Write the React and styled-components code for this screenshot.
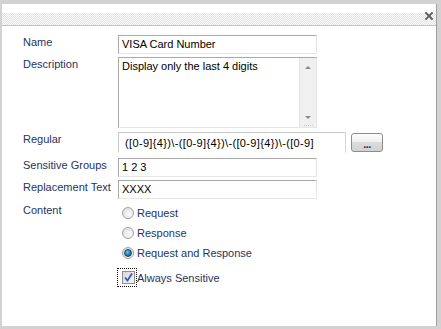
import React from 'react';
import styled, { createGlobalStyle } from 'styled-components';

const GlobalStyle = createGlobalStyle`
  html, body {
    margin: 0;
    padding: 0;
    background: #d2d2d2;
  }
  body {
    font-family: "Liberation Sans", Arial, sans-serif;
    font-size: 11px;
  }
`

const Window = styled.div`
  box-sizing: border-box;
  width: 441px;
  height: 329px;
  padding: 4px 4px 3px 2px;
  background: #d2d2d2;
`

const Panel = styled.div`
  box-sizing: border-box;
  height: 100%;
  background: #fff;
  border-right: 1px solid #9e9e9e;
  display: flex;
  flex-direction: column;
`

const Header = styled.div`
  box-sizing: content-box;
  height: 13px;
  border-bottom: 1px solid #c4c4c4;
  display: flex;
  justify-content: flex-end;
  align-items: flex-start;
  padding: 8px 3px 0 0;
  background-color: #fff;
  background-image:
    linear-gradient(#fff, #fff),
    conic-gradient(#e2e2e2 25%, #fbfbfb 0 50%, #e2e2e2 0 75%, #fbfbfb 0);
  background-size: 100% 9px, 2px 2px;
  background-repeat: no-repeat, repeat;
`

const Close = styled.svg`
  width: 8px;
  height: 8px;
  display: block;
`

const Form = styled.div`
  padding: 9px 0 0 21px;
  display: flex;
  flex-direction: column;
`

const Row = styled.div`
  display: flex;
  align-items: flex-start;
  margin-top: ${p => p.$mt || 0}px;
`

const Label = styled.div`
  width: 95px;
  flex: none;
  line-height: 13px;
  padding-top: 1px;
  color: #1f3462;
`

const Field = styled.div`
  box-sizing: border-box;
  width: ${p => p.$w || 199}px;
  height: ${p => p.$h || 19}px;
  border: 1px solid;
  border-color: #a9a9a9 #e6e6e6 #e6e6e6 #a9a9a9;
  padding: 0 3px;
  line-height: 17px;
  color: #000;
  white-space: nowrap;
  overflow: hidden;
`

const AreaBox = styled.div`
  box-sizing: border-box;
  width: 199px;
  height: 71px;
  border: 1px solid;
  border-color: #a9a9a9 #e6e6e6 #e6e6e6 #a9a9a9;
  display: flex;
`

const AreaText = styled.div`
  flex: 1;
  padding: 2px 3px;
  line-height: 13px;
  color: #000;
`

const ScrollBar = styled.div`
  width: 16px;
  background: #f0f0f0;
  border-left: 1px solid #e4e4e4;
  display: flex;
  flex-direction: column;
  justify-content: space-between;
  align-items: center;
  padding: 8px 0 1px;
`

const ScrollFoot = styled.div`
  display: flex;
  flex-direction: column;
  align-items: center;
  gap: 6px;
`

const Arrow = styled.div`
  width: 0;
  height: 0;
  border-left: 3px solid transparent;
  border-right: 3px solid transparent;
  ${p => p.$down
    ? 'border-top: 3px solid #8a8a8a;'
    : 'border-bottom: 3px solid #8a8a8a;'}
`

const Grip = styled.div`
  width: 9px;
  height: 1px;
  background-image: linear-gradient(90deg, #c8c8c8 50%, transparent 50%);
  background-size: 2px 1px;
`

const RegexBox = styled.div`
  box-sizing: border-box;
  width: 228px;
  height: 21px;
  border: 1px solid;
  border-color: #c8c8c8 #d6d6d6 transparent #c8c8c8;
  padding: 4px 6px 0;
  line-height: 13px;
  letter-spacing: 0.35px;
  color: #000;
  overflow: hidden;
  white-space: pre;
`

const DotsButton = styled.button`
  box-sizing: border-box;
  width: 32px;
  height: 19px;
  margin: 1px 0 0 5px;
  padding: 4px 0 0;
  border: 1px solid #8c8c8c;
  border-radius: 3px;
  background: linear-gradient(#fcfcfc, #f1f1f1 45%, #dcdcdc 50%, #d2d2d2);
  font-family: "Liberation Sans", Arial, sans-serif;
  font-size: 11px;
  line-height: 11px;
  color: #1c2c50;
  font-weight: bold;
  letter-spacing: -0.5px;
`

const Options = styled.div`
  display: flex;
  flex-direction: column;
`

const Option = styled.div`
  display: flex;
  align-items: center;
  height: 20px;
  padding-left: 4px;
  gap: 3px;
  color: #1f3462;
`

const Radio = styled.span`
  box-sizing: border-box;
  width: 12px;
  height: 12px;
  border-radius: 50%;
  border: 1px solid #a2a2a2;
  background: radial-gradient(circle at 60% 65%, #fdfdfd 0%, #e6e6e6 60%, #d4d4d4 100%);
  display: flex;
  align-items: center;
  justify-content: center;
  &::after {
    content: '';
    display: ${p => (p.$checked ? 'block' : 'none')};
    width: 6px;
    height: 6px;
    border-radius: 50%;
    background: radial-gradient(circle at 40% 35%, #6fc3f2, #1474b4 60%, #0d4a7c);
    border: 1px solid #24455f;
  }
`

const CheckRow = styled.div`
  display: flex;
  align-items: center;
  margin-top: 5px;
  color: #1f3462;
`

const Focus = styled.span`
  box-sizing: border-box;
  display: flex;
  align-items: center;
  height: 19px;
  padding: 0 1px 0 4px;
  margin-left: -1px;
  border: 1px dotted #111;
`

const CheckBox = styled.span`
  box-sizing: border-box;
  width: 13px;
  height: 13px;
  border: 1px solid #8e8e8e;
  background: linear-gradient(135deg, #d8d8d8, #f6f6f6);
  display: flex;
  align-items: center;
  justify-content: center;
`

export default function App() {
  return (
    <Window>
      <GlobalStyle />
      <Panel>
        <Header>
          <Close viewBox="0 0 8 8">
            <path d="M1 1 L7 7 M7 1 L1 7" stroke="#5e5e5e" strokeWidth="1.8" strokeLinecap="square" />
          </Close>
        </Header>
        <Form>
          <Row>
            <Label>Name</Label>
            <Field>VISA Card Number</Field>
          </Row>
          <Row $mt={3}>
            <Label>Description</Label>
            <AreaBox>
              <AreaText>Display only the last 4 digits</AreaText>
              <ScrollBar>
                <Arrow />
                <ScrollFoot>
                  <Arrow $down />
                  <Grip />
                </ScrollFoot>
              </ScrollBar>
            </AreaBox>
          </Row>
          <Row $mt={4}>
            <Label>Regular</Label>
            <RegexBox>{'([0-9]{4})\\-([0-9]{4})\\-([0-9]{4})\\-([0-9]\n{4})'}</RegexBox>
            <DotsButton>...</DotsButton>
          </Row>
          <Row $mt={5}>
            <Label>Sensitive Groups</Label>
            <Field>1 2 3</Field>
          </Row>
          <Row $mt={3}>
            <Label>Replacement Text</Label>
            <Field>XXXX</Field>
          </Row>
          <Row $mt={4}>
            <Label>Content</Label>
            <Options>
              <Option><Radio />Request</Option>
              <Option><Radio />Response</Option>
              <Option><Radio $checked />Request and Response</Option>
              <CheckRow>
                <Focus>
                  <CheckBox>
                    <svg width="9" height="9" viewBox="0 0 9 9">
                      <path d="M1 4.5 L3.5 7.5 L8 0.5" fill="none" stroke="#3b57b0" strokeWidth="1.8" />
                    </svg>
                  </CheckBox>
                </Focus>
                Always Sensitive
              </CheckRow>
            </Options>
          </Row>
        </Form>
      </Panel>
    </Window>
  );
}
